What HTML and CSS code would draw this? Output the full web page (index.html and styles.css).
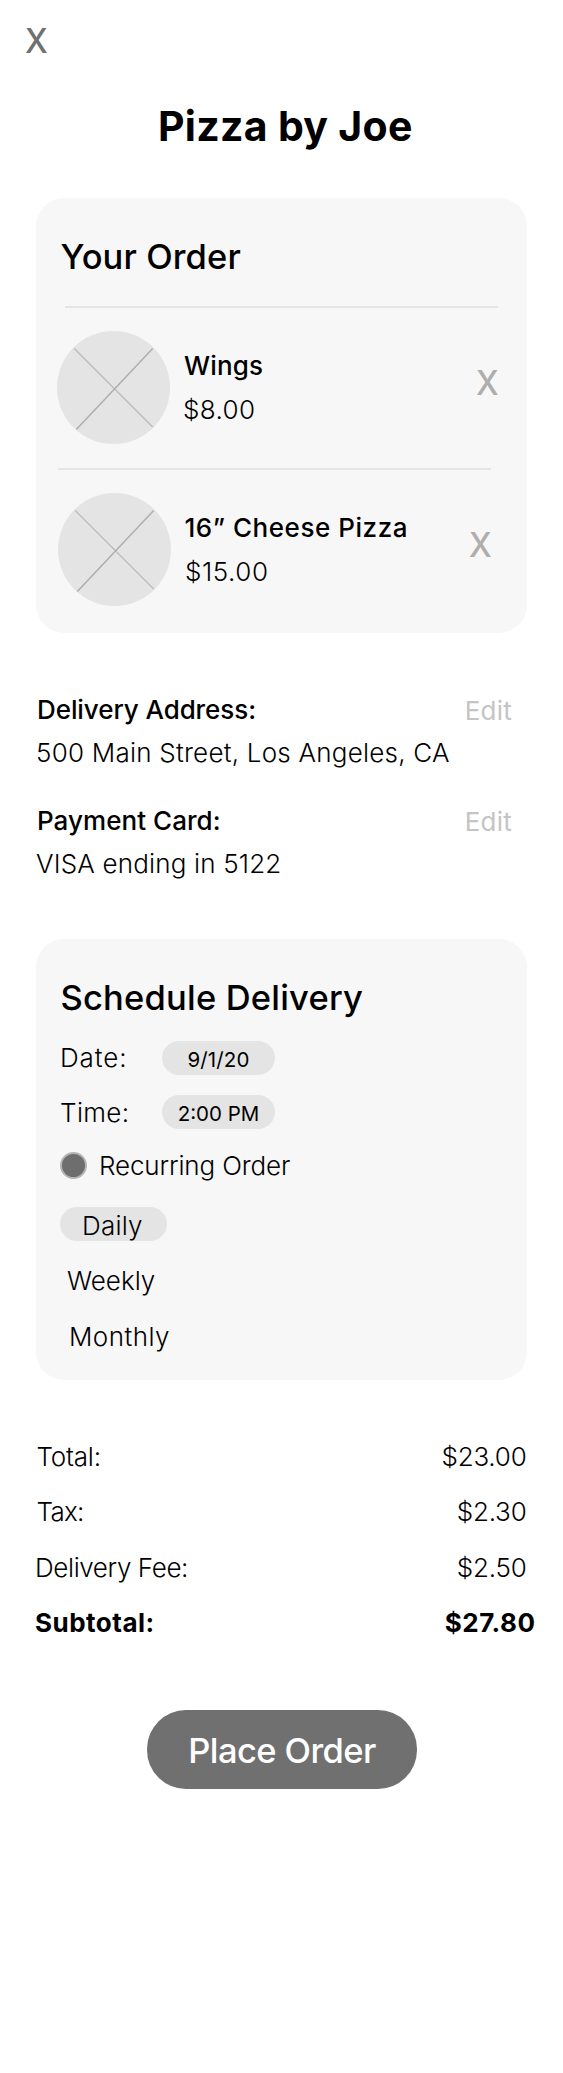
FILE: index.html
```html
<!DOCTYPE html>
<html lang="en">
<head>
<meta charset="utf-8">
<title>Pizza by Joe</title>
<link rel="stylesheet" href="styles.css">
</head>
<body>
<main class="screen">
  <header class="topbar"><span class="x x-close">X</span></header>
  <h1 class="title">Pizza by Joe</h1>

  <section class="card order">
    <h2 class="heading heading-order">Your Order</h2>
    <div class="rule rule-first"></div>
    <div class="item">
      <svg class="thumb" viewBox="0 0 113 113"><circle cx="56.5" cy="56.5" r="56.5" fill="#e4e4e4"/><path d="M17.2 17.5 95.7 96" stroke="#bdbcbc" stroke-width="1.3"/><path d="M95.7 17.5 19.3 98.5" stroke="#b0adad" stroke-width="1.5"/></svg>
      <div class="info">
        <div class="label name-wings">Wings</div>
        <div class="text price-wings">$8.00</div>
      </div>
      <span class="x x-remove">X</span>
    </div>
    <div class="rule rule-second"></div>
    <div class="item item-second">
      <svg class="thumb" viewBox="0 0 113 113"><circle cx="56.5" cy="56.5" r="56.5" fill="#e4e4e4"/><path d="M17.2 17.5 95.7 96" stroke="#bdbcbc" stroke-width="1.3"/><path d="M95.7 17.5 19.3 98.5" stroke="#b0adad" stroke-width="1.5"/></svg>
      <div class="info">
        <div class="label name-pizza">16” Cheese Pizza</div>
        <div class="text price-pizza">$15.00</div>
      </div>
      <span class="x x-remove">X</span>
    </div>
  </section>

  <section class="details">
    <div class="detail-head"><span class="label address-label">Delivery Address:</span><span class="edit">Edit</span></div>
    <div class="text address">500 Main Street, Los Angeles, CA</div>
    <div class="detail-head detail-card"><span class="label payment">Payment Card:</span><span class="edit">Edit</span></div>
    <div class="text visa">VISA ending in 5122</div>
  </section>

  <section class="card schedule">
    <h2 class="heading heading-schedule">Schedule Delivery</h2>
    <div class="field"><span class="text field-name date">Date:</span><span class="pill date-value">9/1/20</span></div>
    <div class="field field-time"><span class="text field-name time">Time:</span><span class="pill time-value">2:00 PM</span></div>
    <div class="recurring"><span class="radio"></span><span class="text recurring-label">Recurring Order</span></div>
    <div class="text option option-on">Daily</div>
    <div class="text option weekly">Weekly</div>
    <div class="text option monthly">Monthly</div>
  </section>

  <section class="totals">
    <div class="row text"><span class="total">Total:</span><span class="amount amount-total">$23.00</span></div>
    <div class="row text"><span class="tax">Tax:</span><span class="amount">$2.30</span></div>
    <div class="row text row-fee"><span class="fee">Delivery Fee:</span><span class="amount">$2.50</span></div>
    <div class="row text row-sub"><span>Subtotal:</span><span>$27.80</span></div>
  </section>

  <button class="place">Place Order</button>
</main>
</body>
</html>
```
FILE: styles.css
```css
* { box-sizing: border-box; }

body {
  margin: 0;
  background: #fff;
  color: #000;
  font-family: Inter, "Liberation Sans", sans-serif;
}

.screen {
  display: flex;
  flex-direction: column;
  width: 563px;
  height: 2073px;
}

.topbar { display: flex; padding: 20px 0 0 25px; }

.x {
  font-size: 34.5px;
  line-height: 42px;
  font-weight: 500;
  transform: scaleX(0.94);
  transform-origin: left;
}
.x-close { color: #707070; }
.x-remove { color: #b0adad; margin: 31px 28.5px 0 auto; width: 22px; }

.title {
  margin: 39px 0 0 158px;
  font-size: 41px;
  line-height: 50px;
  font-weight: 700;
  letter-spacing: 0.29px;
  white-space: nowrap;
}

.card {
  width: 490.5px;
  margin-left: 36px;
  border-radius: 28px;
  background: #f7f7f7;
}

.heading {
  margin: 0;
  font-size: 34.5px;
  line-height: 42px;
  font-weight: 500;
}

.label { font-size: 26px; line-height: 32px; font-weight: 500; white-space: nowrap; }
.text { font-size: 26px; line-height: 32px; font-weight: 300; white-space: nowrap; }

/* Order card */
.order { height: 435px; margin-top: 47px; padding: 38px 0 0 21px; }
.heading-order { padding-left: 3.5px; letter-spacing: 0.12px; }
.rule { width: 433px; height: 2px; background: #e5e5e5; }
.rule-first { margin: 28px 0 0 8px; }
.rule-second { margin: 24px 0 0 1px; }
.item { display: flex; align-items: flex-start; height: 113px; margin-top: 23px; }
.item-second { padding-left: 1px; }
.thumb { width: 113px; height: 113px; flex: none; }
.info { display: flex; flex-direction: column; gap: 12px; padding: 19px 0 0 13px; }
.name-wings { letter-spacing: 0.18px; padding-left: 1px; }
.price-wings { letter-spacing: 0.38px; }
.item-second .x-remove { margin-right: 36px; }
.name-pizza { padding-left: 0.5px; letter-spacing: 0.54px; }
.price-pizza { letter-spacing: 0.56px; padding-left: 1px; }

/* Address and payment */
.details { margin: 61px 0 0 36px; }
.detail-head { display: flex; justify-content: space-between; width: 476px; height: 32px; }
.address-label { padding-left: 1px; letter-spacing: -0.08px; }
.detail-card { margin-top: 36px; }
.edit {
  font-size: 26px;
  line-height: 34px;
  letter-spacing: 0.22px;
  color: #c4c4c4;
}
.payment { padding-left: 1px; letter-spacing: 0.05px; }
.address { margin-top: 11px; letter-spacing: 0.23px; }
.visa { margin-top: 11px; letter-spacing: 0.17px; }

/* Schedule card */
.schedule { height: 441px; margin-top: 59px; padding: 38px 0 0 24px; }
.heading-schedule { padding-left: 0.5px; letter-spacing: 0.2px; }
.field { display: flex; height: 34px; margin-top: 22px; }
.field-time { margin-top: 20px; }
.field-name { width: 102px; line-height: 34px; }
.date { letter-spacing: 0.9px; }
.time { line-height: 36px; letter-spacing: 0.36px; }
.pill {
  width: 113px;
  height: 34px;
  padding-top: 2px;
  border-radius: 17px;
  background: #e4e4e4;
  font-size: 20.5px;
  line-height: 34px;
  text-align: center;
}
.date-value { letter-spacing: 0.13px; }
.recurring { display: flex; align-items: center; gap: 12px; height: 27px; margin-top: 23px; }
.radio { width: 27px; height: 27px; border: 2px solid #b5b5b5; border-radius: 50%; background: #6e6e6e; }
.recurring-label { line-height: 27px; letter-spacing: -0.14px; }
.option { height: 34px; line-height: 34px; margin-top: 22px; }
.option-on {
  width: 107px;
  margin-top: 28px;
  padding: 2px 0 0 22px;
  border-radius: 17px;
  background: #e4e4e4;
  letter-spacing: 0.22px;
}
.weekly { margin-top: 23px; padding-left: 7px; letter-spacing: 0; }
.monthly { padding-left: 9px; letter-spacing: 0.46px; }

/* Totals */
.totals { display: flex; flex-direction: column; gap: 23px; margin: 61px 36.5px 0 36px; }
.row { display: flex; justify-content: space-between; }
.total { padding-left: 0.5px; letter-spacing: -0.2px; }
.tax { padding-left: 0.5px; letter-spacing: -0.7px; }
.amount { letter-spacing: -0.22px; }
.row-fee { margin: 1px 0 0 -1px; }
.fee { letter-spacing: -0.4px; }
.row-sub { margin: 0 -9px 0 -1px; font-weight: 700; letter-spacing: 0.5px; }

.place {
  width: 270px;
  height: 79px;
  margin: 71px 0 0 147px;
  padding: 2px 0 0;
  border: 0;
  border-radius: 39px;
  background: #707070;
  color: #fff;
  font: 500 34.5px/42px Inter, "Liberation Sans", sans-serif;
  letter-spacing: -0.58px;
}
```
